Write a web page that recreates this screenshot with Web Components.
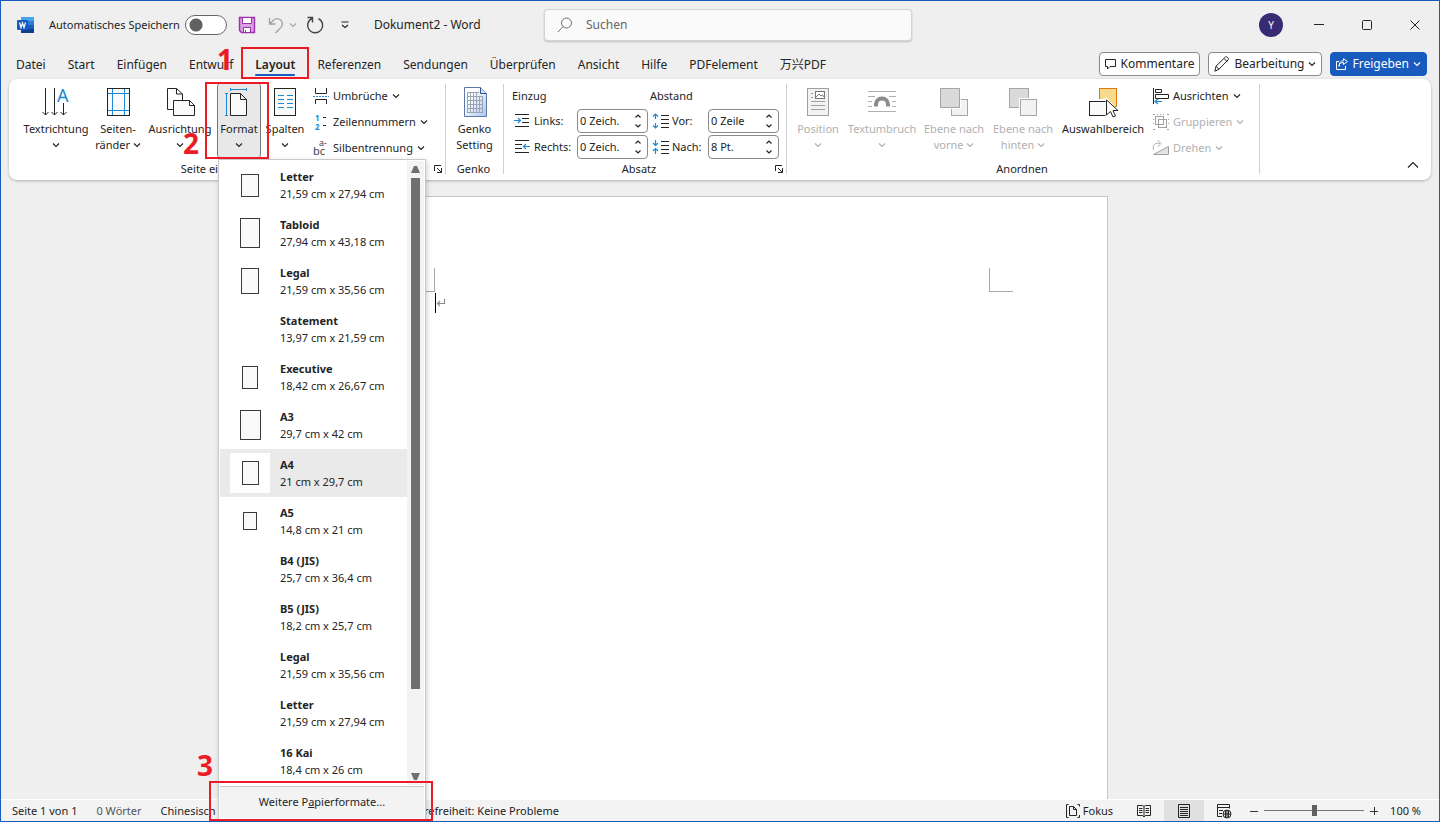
<!DOCTYPE html>
<html lang="de">
<head>
<meta charset="utf-8">
<title>Dokument2 - Word</title>
<style>
html, body { margin: 0; }
body { font: 11px/16px "Noto Sans", "Noto Sans CJK SC", sans-serif; color: #242424; background: #efefef; }
</style>
</head>
<body>
<word-window></word-window>
<script>
const define = (name, css, html, setup) => {
  const tpl = document.createElement('template');
  tpl.innerHTML = `<style>*{box-sizing:border-box}button{font:inherit;color:inherit;background:none;border:0;padding:0;margin:0}${css}</style>${html}`;
  customElements.define(name, class extends HTMLElement {
    constructor() {
      super();
      this.attachShadow({ mode: 'open' }).append(tpl.content.cloneNode(true));
    }
    connectedCallback() { if (setup) setup(this, this.shadowRoot); }
  });
};
const makeIcon = (name) => {
  const icon = document.createElement('ui-icon');
  icon.setAttribute('name', name);
  return icon;
};

/* name: [width, height, drawing] */
const ICONS = {
  chevron: [8, 8, '<path d="M1 2.500l3 3 3-3" stroke-width="1.200"/>'],
  up: [8, 6, '<path d="M1.500 4.500L4 2l2.500 2.500" stroke-width="1.200"/>'],
  down: [8, 6, '<path d="M1.500 1.500L4 4l2.500-2.500" stroke-width="1.200"/>'],
  collapse: [12, 8, '<path d="M1 6.500l5-5 5 5" stroke-width="1.200"/>'],
  launcher: [10, 10, '<path d="M1.500 7V1.500H8M4 4l4 4M8.500 4v4.500H4"/>'],
  word: [18, 16, '<g stroke="none"><path d="M4 0h13v4H4z" fill="#41a5ee"/><path d="M4 4h13v4H4z" fill="#2b7cd3"/><path d="M4 8h13v4H4z" fill="#185abd"/><path d="M4 12h13v4H4z" fill="#103f91"/><rect x="0" y="3" width="11" height="10" rx="1" fill="#185abd"/></g><path d="M2.500 5.500L4 10.500l1.500-4.500L7 10.500l1.500-5" stroke="#fff" stroke-width="1.200"/>'],
  save: [16, 16, '<path d="M.5.5h15v15H2.500l-2-2z" fill="#d9a0e0" stroke="#9b2fae" stroke-width="1.400"/><path d="M3.500.5h9v6h-9zM4.500 10.500h7v5h-7z" fill="#fff" stroke="#9b2fae"/><path d="M6.500 13v2.500" stroke="#9b2fae"/>'],
  undo: [16, 17, '<path d="M1.500 1v6h6M1.500 7L5.500 3.200a5.200 5.200 0 0 1 7.500 7.200L7.500 16" stroke="#a0a0a0" stroke-width="1.300"/>'],
  redo: [18, 18, '<path d="M6 2.500A7.500 7.500 0 1 0 12.500 2.600M1.500 1.500H6.500V6.500" stroke="#444" stroke-width="1.400"/>'],
  custom: [8, 8, '<path d="M.5 1h7M1 4l3 2.500L7 4" stroke-width="1.200"/>'],
  search: [16, 16, '<circle cx="9.500" cy="6" r="5" stroke="#707070"/><path d="M6 9.500L1 15" stroke="#707070"/>'],
  minimize: [10, 10, '<path d="M0 4.500h10"/>'],
  maximize: [10, 10, '<rect x=".5" y=".5" width="9" height="9" rx="1"/>'],
  close: [10, 10, '<path d="M.5.5l9 9M9.500.5l-9 9"/>'],
  comment: [12, 12, '<path d="M.5 1.500h10v7H5L2.500 11V8.500h-2z"/>'],
  pencil: [16, 16, '<path d="M.8 15.200l1.200-5L11.500.9c1.200-.8 3.600 1.400 2.800 2.800L5 13.200zM2 10.200l3 3M10 2.500l3 3"/>'],
  share: [12, 12, '<path d="M3 3.500H.5v8h9V8M3 8.500c.3-3 1.800-4 4.500-4V6.500L11.500 3.500 7.500.7v2C4.500 2.700 3 5 3 8.500z"/>'],
  textdir: [32, 32, '<path d="M5.500 1v27M2.500 25l3 3 3-3M14.500 1v27M11.500 25l3 3 3-3M23.500 16v12M20.500 25l3 3 3-3"/><text x="17" y="15" font-size="18" fill="#1e88d2" stroke="none">A</text>'],
  margins: [32, 32, '<rect x="5.500" y="1.500" width="22" height="27" fill="#fafafa"/><path d="M10.500 2v26M22.500 2v26M6 6.500h21M6 23.500h21" stroke="#1e88d2"/>'],
  orient: [32, 32, '<path d="M3.500 1.500h9l6 5.500v7M3.500 1.500v21h6M12.500 1.500V7h6" fill="#fafafa"/><path d="M9.500 13.500h16l5 5v10h-21zM25.500 13.500v5h5" fill="#fafafa"/>'],
  size: [32, 32, '<path d="M7.500 6.500h10l6 6v16h-16zM17.500 6.500v6h6" fill="#fafafa"/><path d="M3.500 6v22M2 6.500h3M2 28.500h3M8 2.500h15M7.500 1v3M23.500 1v3" stroke="#1e88d2"/>'],
  columns: [32, 32, '<rect x="5.500" y="1.500" width="21" height="27" fill="#fafafa"/><path d="M9 8.500h6M18 8.500h6M9 12.500h6M18 12.500h6M9 16.500h6M18 16.500h6M9 20.500h6M18 20.500h6" stroke="#1e88d2"/>'],
  genko: [32, 32, '<defs><linearGradient id="g" x1="0" y1="0" x2="1" y2="1"><stop offset=".3" stop-color="#fff"/><stop offset="1" stop-color="#a9c4ee"/></linearGradient></defs><path d="M5.500.5h16l6 6v23h-22z" fill="url(#g)" stroke="#5b78ad"/><path d="M21.500.5v6h6" fill="#cfe0f7" stroke="#2f4f8a"/><path d="M8 5.500h12M8 9.500h16M8 13.500h16M8 17.500h16M8 21.500h16M8 25.500h16M8.500 5v21M11.500 5v21M14.500 5v21M17.500 5v21M20.500 9v17M23.500 9v17" stroke="#98a3b3"/>'],
  breaks: [16, 16, '<path d="M2.500 0v5.500h11V0M2.500 16v-4.500h11V16"/><path d="M0 8.500h16" stroke="#1e88d2" stroke-dasharray="2 1"/>'],
  linenum: [16, 16, '<text x="2" y="7" font-size="8" font-weight="bold" fill="#1e88d2" stroke="none">1</text><text x="2" y="16" font-size="8" font-weight="bold" fill="#1e88d2" stroke="none">2</text><path d="M10 3.500h3M10 11.500h3"/>'],
  hyphen: [16, 16, '<text x="6" y="6" font-size="9" fill="#444" stroke="none">a-</text><text x="0" y="15" font-size="11" fill="#444" stroke="none">bc</text>'],
  indentl: [16, 16, '<path d="M1 1.500h14M8 5.500h7M8 9.500h7M1 13.500h14"/><path d="M0 7.500h6M4 5l2.500 2.500L4 10" stroke="#1e88d2" stroke-width="1.200"/>'],
  indentr: [16, 16, '<path d="M1 1.500h14M1 5.500h7M1 9.500h7M1 13.500h14"/><path d="M10 7.500h6M12 5L9.500 7.500 12 10" stroke="#1e88d2" stroke-width="1.200"/>'],
  before: [18, 16, '<path d="M9 2.500h8M9 6.500h8M9 10.500h8M9 14.500h8"/><path d="M3.500 1v5M1 3.500L3.500 1 6 3.500M3.500 10v5M1 12.500L3.500 15 6 12.500" stroke="#1e88d2" stroke-width="1.200"/>'],
  after: [18, 16, '<path d="M9 2.500h8M9 6.500h8M9 10.500h8M9 14.500h8"/><path d="M3.500 1v5M1 4l2.500 2.500L6 4M3.500 15v-5M1 12l2.500-2.500L6 12" stroke="#1e88d2" stroke-width="1.200"/>'],
  position: [32, 32, '<g stroke="#a0a0a0"><rect x="5.500" y="1.500" width="21" height="27" fill="#f2f2f2"/><rect x="13.500" y="4.500" width="9" height="7" fill="#fff" stroke="#777"/><path d="M14 10l3-3 2 2 1.500-1 2 2.500" stroke="#777"/><path d="M9 6.500h2M9 10.500h2M9 14.500h14M9 18.500h14M9 22.500h14"/></g>'],
  wrap: [32, 32, '<path d="M2 4.500h28M2 9.500h7M23 9.500h7M2 14.500h4M26 14.500h4M2 19.500h4M26 19.500h4M2 24.500h28" stroke="#b0b0b0"/><path d="M10 19.500v-2a6 6 0 0 1 12 0v2" stroke="#8c8c8c" stroke-width="4"/>'],
  front: [32, 32, '<g stroke="#a6a6a6"><rect x="13.500" y="12.500" width="16" height="16" fill="#f2f2f2"/><rect x="1.500" y=".5" width="21" height="21" fill="#fff" stroke="#fff"/><rect x="2.500" y="1.500" width="19" height="19" fill="#dadada"/></g>'],
  back: [32, 32, '<g stroke="#a6a6a6"><rect x="2.500" y="1.500" width="19" height="19" fill="#dadada"/><rect x="12.500" y="11.500" width="18" height="18" fill="#fff" stroke="#fff"/><rect x="13.500" y="12.500" width="16" height="16" fill="#f2f2f2"/></g>'],
  selection: [32, 32, '<rect x="12.500" y="1.500" width="17" height="18" fill="#f7da8e" stroke="#e07a10"/><path d="M1.500 13.500h17v15h-17z" fill="#fff" stroke="#fff" stroke-width="3"/><rect x="2.500" y="14.500" width="17" height="14" fill="#fafafa"/><path d="M19.500 12v18l4-3.500 2 4.500 3-1.500-2-4.500h5z" fill="#fff" stroke="#fff" stroke-width="2"/><path d="M19.500 13v15l4-3.500 2.500 5.500 2.500-1-2.500-5.500h5z" fill="#fff"/>'],
  align: [18, 18, '<path d="M1.500 1v16M3.500 2.500h6v3h-6zM3.500 7.500h13v4h-13z"/><path d="M3 14.500h7M6 12l-3 2.500L6 17" stroke="#1e88d2" stroke-width="1.200"/>'],
  group: [18, 18, '<g stroke="#a0a0a0"><rect x="3.500" y="3.500" width="8" height="8"/><rect x="6.500" y="6.500" width="8" height="8"/><path d="M1 1.500h2M15 1.500h2M1 16.500h2M15 16.500h2M5 1.500h1M8 1.500h1M11 1.500h1M1.500 6v1M1.500 10v1M16.500 6v1M16.500 10v1"/></g>'],
  rotate: [18, 18, '<path d="M1.500 15.500h15v-8z" fill="#e4e4e4" stroke="#a0a0a0"/><path d="M1.500 11C0 5 4 3.500 8 4.500M5.500 1L9 4.500 5.500 8" stroke="#b0b0b0"/>'],
  focus: [16, 16, '<path d="M3.500 1.500h-2v13h2M12.500 1.500h2v2M14.500 12v2.500h-2M4.500 3.500h4l3 3v6h-7zM8.500 3.500v3h3"/>'],
  read: [16, 16, '<path d="M1.500 2.500h5l1.500 1 1.500-1h5v10h-5L8 14l-1.500-1.500h-5zM8 3.500V14M3 5.500h3.500M3 7.500h3.500M3 9.500h3.500M9.500 5.500H13M9.500 7.500H13M9.500 9.500H13"/>'],
  print: [14, 16, '<path d="M1.500 1.500h11v13h-11zM3 4.500h8M3 6.500h8M3 8.500h8M3 10.500h8M3 12.500h8"/>'],
  web: [16, 16, '<path d="M6 13.500H1.500v-12h12v4M1.500 4.500h12M3 7.500h4M3 10.500h3"/><circle cx="11" cy="11" r="4"/><path d="M7 11h8M11 7v8M9.500 7.500v7M12.500 7.500v7"/>'],
  mark: [10, 10, '<path d="M8.500 1v4.500H1.500M4 3L1.500 5.500 4 8" stroke="#8a8a8a" stroke-width="1.200"/>']
};
define('ui-icon', ':host{display:inline-flex;flex:none}svg{display:block;fill:none;stroke:currentColor;overflow:visible}', '<span></span>', (el, root) => {
  const [w, h, body] = ICONS[el.getAttribute('name')];
  root.querySelector('span').innerHTML = `<svg width="${w}" height="${h}" viewBox="0 0 ${w} ${h}" aria-hidden="true">${body}</svg>`;
});

define('title-bar', `
:host{box-sizing:border-box;display:grid;grid-template-columns:1fr 368px 1fr;align-items:center;height:48px;padding-left:16px}
.left,.right,.tools{display:flex;align-items:center}
.auto{display:flex;align-items:center;gap:5px;margin-left:14px}
.auto input{appearance:none;margin:0;width:42px;height:20px;border:1px solid #666;border-radius:10px;background:radial-gradient(circle at 10px 9px,#606060 6px,#fff 7px)}
.tools{margin-left:12px}
.tools button{display:flex}
.undo{margin-left:13px}.more{margin-left:5px;color:#a8a8a8}.redo{margin-left:9px}.custom{margin-left:17px}
.title{font-size:12px;margin-left:25px;white-space:nowrap}
.search{display:flex;align-items:center;gap:13px;height:32px;padding:0 12px;background:#fafafa;border:1px solid #d4d4d4;border-radius:4px;box-shadow:0 1px 2px #0003}
.search input{flex:1;min-width:0;border:0;outline:0;background:none;font:12px/16px "Noto Sans",sans-serif;padding:0}
.search input::placeholder{color:#666}
.right{justify-content:flex-end}
.avatar{width:24px;height:24px;border-radius:50%;background:#372c73;color:#fff;font-size:10px;margin-right:12px}
.win{width:48px;height:40px;display:grid;place-items:center}
`, `
<div class="left"><ui-icon name="word"></ui-icon>
<label class="auto">Automatisches Speichern<input type="checkbox" role="switch"></label>
<div class="tools"><button aria-label="Speichern"><ui-icon name="save"></ui-icon></button>
<button class="undo" aria-label="Rückgängig"><ui-icon name="undo"></ui-icon></button>
<button class="more" aria-label="Verlauf"><ui-icon name="chevron"></ui-icon></button>
<button class="redo" aria-label="Wiederholen"><ui-icon name="redo"></ui-icon></button>
<button class="custom" aria-label="Symbolleiste anpassen"><ui-icon name="custom"></ui-icon></button></div>
<span class="title">Dokument2 - Word</span></div>
<label class="search"><ui-icon name="search"></ui-icon><input type="search" placeholder="Suchen" aria-label="Suchen"></label>
<div class="right"><button class="avatar">Y</button>
<button class="win" aria-label="Minimieren"><ui-icon name="minimize"></ui-icon></button>
<button class="win" aria-label="Maximieren"><ui-icon name="maximize"></ui-icon></button>
<button class="win" aria-label="Schließen"><ui-icon name="close"></ui-icon></button></div>`);

define('ribbon-tab', `
:host{display:block}
button{position:relative;height:30px;padding-top:2px;white-space:nowrap}
:host([active]) button{font-weight:600}
:host([active]) button::after{content:"";position:absolute;left:0;right:0;bottom:3px;height:2px;border-radius:1px;background:#185abd}
`, '<button role="tab"><slot></slot></button>');

define('action-button', `
:host{display:block}
button{display:flex;align-items:center;gap:4px;height:24px;padding:0 5px;border:1px solid #8a8a8a;border-radius:4px;background:#fff;white-space:nowrap}
:host([primary]) button{background:#185abd;border-color:#185abd;color:#fff}
`, '<button><slot></slot></button>');

define('tab-bar', `
:host{box-sizing:border-box;display:flex;justify-content:space-between;align-items:flex-start;height:30px;padding:0 12px 0 15px;font-size:12px}
nav{display:flex;gap:22px}
.actions{display:flex;gap:8px;padding-top:3px}
`, `<nav role="tablist"><ribbon-tab>Datei</ribbon-tab><ribbon-tab>Start</ribbon-tab><ribbon-tab>Einfügen</ribbon-tab><ribbon-tab>Entwurf</ribbon-tab><ribbon-tab active>Layout</ribbon-tab><ribbon-tab>Referenzen</ribbon-tab><ribbon-tab>Sendungen</ribbon-tab><ribbon-tab>Überprüfen</ribbon-tab><ribbon-tab>Ansicht</ribbon-tab><ribbon-tab>Hilfe</ribbon-tab><ribbon-tab>PDFelement</ribbon-tab><ribbon-tab>万兴PDF</ribbon-tab></nav>
<div class="actions"><action-button><ui-icon name="comment"></ui-icon>Kommentare</action-button><action-button><ui-icon name="pencil"></ui-icon>Bearbeitung<ui-icon name="chevron"></ui-icon></action-button><action-button primary><ui-icon name="share"></ui-icon>Freigeben<ui-icon name="chevron"></ui-icon></action-button></div>`);

define('big-button', `
:host{display:block}
button{display:flex;flex-direction:column;align-items:center;width:100%;height:75px;padding-top:4px;border:1px solid transparent;border-width:0 1px;border-radius:4px;white-space:nowrap}
.label{margin-top:2px;line-height:16px}
:host([active]) button{background:#e8e8e8;border-color:#777}
:host([disabled]) button{color:#b0b0b0}
`, '<button><span class="pic"></span><span class="label"><slot></slot></span></button>', (el, root) => {
  root.querySelector('.pic').replaceChildren(makeIcon(el.getAttribute('icon')));
  root.querySelector('.pic').style.display = 'flex';
  root.querySelector('button').disabled = el.hasAttribute('disabled');
});

define('row-button', `
:host{display:block}
button{display:flex;align-items:center;gap:4px;height:26px;white-space:nowrap}
.pic{display:flex;justify-content:center;width:16px}
:host([disabled]) button{color:#b0b0b0}
`, '<button><span class="pic"></span><slot></slot><ui-icon name="chevron"></ui-icon></button>', (el, root) => {
  root.querySelector('.pic').replaceChildren(makeIcon(el.getAttribute('icon')));
  root.querySelector('button').disabled = el.hasAttribute('disabled');
});

define('spin-field', `
:host{display:grid;grid-template-columns:18px var(--label-width,41px) 71px;align-items:center;height:26px;column-gap:2px}
.pic{display:flex}
label{white-space:nowrap}
.box{display:flex;width:71px;height:24px;border:1px solid #8a8a8a;border-radius:4px;background:#fff;padding:0 5px 0 2px}
input{flex:1;min-width:0;width:40px;border:0;outline:0;padding:0;background:none;font:inherit;color:inherit}
.spin{display:flex;flex-direction:column;justify-content:space-between;padding:3px 0}
.spin button{display:flex}
`, `<span class="pic"></span><label for="v"></label><span class="box"><input id="v"><span class="spin"><button aria-label="Mehr"><ui-icon name="up"></ui-icon></button><button aria-label="Weniger"><ui-icon name="down"></ui-icon></button></span></span>`, (el, root) => {
  root.querySelector('.pic').replaceChildren(makeIcon(el.getAttribute('icon')));
  root.querySelector('label').textContent = el.getAttribute('label');
  root.querySelector('input').value = el.getAttribute('value');
});

define('ribbon-group', `
:host{display:flex}
.group{display:flex;flex-direction:column;flex:1;padding:4px 0 3px}
.content{flex:1;min-height:78px}
.foot{display:flex;align-items:center;height:16px;padding-right:2px}
.foot span{flex:1;text-align:center}
.foot button{display:none}
:host([launcher]) .foot button{display:flex}
.sep{width:1px;margin:5px 0 6px;background:#d0d0d0}
`, '<div class="group"><div class="content"><slot></slot></div><div class="foot"><span></span><button aria-label="Weitere Optionen"><ui-icon name="launcher"></ui-icon></button></div></div><div class="sep"></div>', (el, root) => {
  root.querySelector('.foot span').textContent = el.getAttribute('label');
});

define('ribbon-bar', `
:host{display:flex;margin:0 8px;background:#fff;border-radius:8px;box-shadow:0 1px 3px #0004;min-height:101px}
.row{display:grid}
.page{grid-template-columns:74px 50px 74px 44px 48px 136px;padding-left:10px}
.genko{grid-template-columns:57px}
.para{grid-template-columns:136px 132px;column-gap:2px;padding:0 4px 0 8px}
.para h3{margin:0;font:inherit;line-height:25px}
.arrange{grid-template-columns:54px 74px 70px 68px 92px 102px;padding:0 8px 0 4px}
.stack{padding-left:4px}
.down{display:flex;justify-content:center;align-items:center;height:16px}
.end{flex:1;display:flex;justify-content:flex-end;align-items:flex-end;padding:0 12px 7px 0}
.fields{padding-left:2px}
.fields.b{--label-width:34px}
`, `
<ribbon-group label="Seite einrichten" launcher><div class="row page">
<big-button icon="textdir">Textrichtung<span class="down"><ui-icon name="chevron"></ui-icon></span></big-button>
<big-button icon="margins">Seiten-<br>ränder <ui-icon name="chevron"></ui-icon></big-button>
<big-button icon="orient">Ausrichtung<span class="down"><ui-icon name="chevron"></ui-icon></span></big-button>
<big-button icon="size" active>Format<span class="down"><ui-icon name="chevron"></ui-icon></span></big-button>
<big-button icon="columns">Spalten<span class="down"><ui-icon name="chevron"></ui-icon></span></big-button>
<div class="stack"><row-button icon="breaks">Umbrüche</row-button><row-button icon="linenum">Zeilennummern</row-button><row-button icon="hyphen">Silbentrennung</row-button></div>
</div></ribbon-group>
<ribbon-group label="Genko"><div class="row genko"><big-button icon="genko">Genko<br>Setting</big-button></div></ribbon-group>
<ribbon-group label="Absatz" launcher><div class="row para">
<div><h3>Einzug</h3><div class="fields"><spin-field icon="indentl" label="Links:" value="0 Zeich."></spin-field><spin-field icon="indentr" label="Rechts:" value="0 Zeich."></spin-field></div></div>
<div><h3>Abstand</h3><div class="fields b"><spin-field icon="before" label="Vor:" value="0 Zeile"></spin-field><spin-field icon="after" label="Nach:" value="8 Pt."></spin-field></div></div>
</div></ribbon-group>
<ribbon-group label="Anordnen"><div class="row arrange">
<big-button icon="position" disabled>Position<span class="down"><ui-icon name="chevron"></ui-icon></span></big-button>
<big-button icon="wrap" disabled>Textumbruch<span class="down"><ui-icon name="chevron"></ui-icon></span></big-button>
<big-button icon="front" disabled>Ebene nach<br>vorne <ui-icon name="chevron"></ui-icon></big-button>
<big-button icon="back" disabled>Ebene nach<br>hinten <ui-icon name="chevron"></ui-icon></big-button>
<big-button icon="selection">Auswahlbereich</big-button>
<div class="stack"><row-button icon="align">Ausrichten</row-button><row-button icon="group" disabled>Gruppieren</row-button><row-button icon="rotate" disabled>Drehen</row-button></div>
</div></ribbon-group>
<div class="end"><button aria-label="Menüband reduzieren"><ui-icon name="collapse"></ui-icon></button></div>`);

define('doc-canvas', `
:host{display:flex;justify-content:center;flex:1;padding:16px 17px 0 0}
.page{width:793px;background:#fff;border:1px solid #c6c6c6;border-bottom:0;padding-top:71px}
.marks{display:flex;justify-content:space-between;padding:0 94px 0 95px}
.marks i{width:24px;height:24px;border:0 solid #a8a8a8;border-bottom-width:1px}
.marks i:first-child{border-right-width:1px}.marks i:last-child{border-left-width:1px}
.line{display:flex;align-items:center;height:21px;padding-left:119px}
.caret{width:1px;height:20px;background:#000}
`, '<main class="page"><div class="marks"><i></i><i></i></div><div class="line"><span class="caret"></span><ui-icon name="mark"></ui-icon></div></main>');

define('status-bar', `
:host{box-sizing:border-box;display:flex;justify-content:space-between;align-items:center;height:22px;background:#f3f3f3;border-top:1px solid #fff}
.left,.right{display:flex;align-items:center;height:100%;white-space:nowrap}
.left{padding-left:11px;gap:19px}
.left .words{color:#555}
.left .access{margin-left:158px}
.right{padding-right:18px}
.right button{display:flex;align-items:center;justify-content:center;gap:2px;height:100%;width:40px}
.right .focus{width:auto;margin-right:11px}
.right .on{background:#e0e0e0}
.right .zoom{width:16px}
.right .minus{margin-left:2px}
input{appearance:none;width:100px;height:12px;margin:0 2px;background:linear-gradient(#777,#777) center/100% 1px no-repeat}
input::-webkit-slider-thumb{appearance:none;width:5px;height:11px;background:#606060}
output{margin-left:8px}
`, `<div class="left"><span>Seite 1 von 1</span><span class="words">0 Wörter</span><span>Chinesisch</span><span class="access">Barrierefreiheit: Keine Probleme</span></div>
<div class="right"><button class="focus"><ui-icon name="focus"></ui-icon>Fokus</button><button aria-label="Lesemodus"><ui-icon name="read"></ui-icon></button><button class="on" aria-label="Seitenlayout"><ui-icon name="print"></ui-icon></button><button aria-label="Weblayout"><ui-icon name="web"></ui-icon></button>
<button class="zoom minus" aria-label="Verkleinern"><svg width="10" height="10" stroke="#333"><path d="M1 5.500h8"/></svg></button><input type="range" min="0" max="100" value="50" aria-label="Zoom"><button class="zoom" aria-label="Vergrößern"><svg width="10" height="10" stroke="#333"><path d="M1 5.500h8M5.500 1v8"/></svg></button><output>100 %</output></div>`);

define('size-item', `
:host{display:block}
button{display:flex;align-items:center;gap:10px;width:100%;height:48px;padding:0 10px;text-align:left;line-height:17px}
.pic{display:grid;place-items:center;flex:none;width:40px;height:40px}
.pic i{display:block;border:1px solid #3a3a3a;background:#fafafa}
:host([selected]) button{background:#eaeaea}
:host([selected]) .pic{background:#fff}
strong,.dim{display:block;white-space:nowrap}
`, '<button role="option"><span class="pic"></span><span><strong></strong><span class="dim"><slot></slot></span></span></button>', (el, root) => {
  root.querySelector('strong').textContent = el.getAttribute('label');
  if (el.hasAttribute('sheet')) {
    const [w, h] = el.getAttribute('sheet').split(' ');
    const i = document.createElement('i');
    i.style.cssText = `width:${w}px;height:${h}px`;
    root.querySelector('.pic').replaceChildren(i);
  }
});

define('size-menu', `
:host{box-sizing:border-box;display:block;background:#fff;border:1px solid #c8c8c8;box-shadow:1px 2px 5px #0003;padding:1px}
.body{display:flex}
.list{flex:1}
.bar{display:flex;flex-direction:column;align-items:center;width:17px;padding:5px 0;background:#f3f3f3}
.thumb{width:9px;height:511px;margin:5px 0 auto;background:#707070}
.bar svg{display:block}
.more{display:block;width:100%;height:32px;background:#f3f3f3;border-top:1px solid #c8c8c8;margin-top:1px;padding-bottom:1px;text-align:center}
`, `<div class="body"><div class="list" role="listbox">
<size-item label="Letter" sheet="18 23">21,59 cm x 27,94 cm</size-item>
<size-item label="Tabloid" sheet="20 30">27,94 cm x 43,18 cm</size-item>
<size-item label="Legal" sheet="18 26">21,59 cm x 35,56 cm</size-item>
<size-item label="Statement">13,97 cm x 21,59 cm</size-item>
<size-item label="Executive" sheet="16 23">18,42 cm x 26,67 cm</size-item>
<size-item label="A3" sheet="21 30">29,7 cm x 42 cm</size-item>
<size-item label="A4" sheet="17 24" selected>21 cm x 29,7 cm</size-item>
<size-item label="A5" sheet="14 18">14,8 cm x 21 cm</size-item>
<size-item label="B4 (JIS)">25,7 cm x 36,4 cm</size-item>
<size-item label="B5 (JIS)">18,2 cm x 25,7 cm</size-item>
<size-item label="Legal">21,59 cm x 35,56 cm</size-item>
<size-item label="Letter">21,59 cm x 27,94 cm</size-item>
<size-item label="16 Kai">18,4 cm x 26 cm</size-item>
</div><div class="bar"><svg width="9" height="7"><path d="M3 0h3l3 7H0z" fill="#707070"/></svg><span class="thumb"></span><svg width="9" height="7"><path d="M3 7h3l3-7H0z" fill="#707070"/></svg></div></div>
<button class="more">Weitere P<u>a</u>pierformate...</button>`);

define('step-mark', `
:host{box-sizing:border-box;display:block;border:2px solid #ed1c24;pointer-events:none}
b{position:absolute;right:100%;font-size:28px;line-height:28px;color:#ed1c24}
:host([side=top]) b{top:-4px;margin-right:10px}
:host([side=bottom]) b{bottom:0;margin-right:8px}
:host([side=above]) b{bottom:100%;padding-bottom:4px;margin-right:-2px}
`, '<b><slot></slot></b>');

define('word-window', `
:host{box-sizing:border-box;position:relative;display:flex;flex-direction:column;min-height:100vh;border:1px solid #185abd;background:#efefef;overflow:hidden}
size-menu{position:absolute;left:217px;top:158px;width:208px}
step-mark{position:absolute}
.s1{left:240px;top:46px;width:68px;height:32px}
.s2{left:204px;top:81px;width:64px;height:77px}
.s3{left:208px;top:780px;width:224px;height:40px}
`, `<title-bar></title-bar><tab-bar></tab-bar><ribbon-bar></ribbon-bar><doc-canvas></doc-canvas><status-bar></status-bar>
<size-menu></size-menu>
<step-mark class="s1" side="top">1</step-mark><step-mark class="s2" side="bottom">2</step-mark><step-mark class="s3" side="above">3</step-mark>`);
</script>
</body>
</html>
